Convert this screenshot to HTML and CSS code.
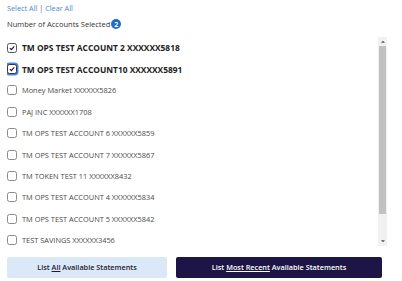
FILE: index.html
```html
<!DOCTYPE html>
<html>
<head>
<meta charset="utf-8">
<link rel="stylesheet" href="styles.css">
</head>
<body>
<div class="page">
  <div class="links"><a class="link">Select All</a> <span class="sep">|</span> <a class="link">Clear All</a></div>
  <div class="count">Number of Accounts Selected <span class="badge">2</span></div>
  <div class="list-wrap">
    <div class="list">
      <label class="row sel"><span class="cb on"><svg viewBox="0 0 10 10"><path d="M2.3 5.2 L4.2 7.1 L7.8 2.9" /></svg></span><span class="name">TM OPS TEST ACCOUNT 2 XXXXXX5818</span></label>
      <label class="row sel"><span class="cb on focus"><svg viewBox="0 0 10 10"><path d="M2.3 5.2 L4.2 7.1 L7.8 2.9" /></svg></span><span class="name">TM OPS TEST ACCOUNT10 XXXXXX5891</span></label>
      <label class="row"><span class="cb"></span><span class="name">Money Market XXXXXX5826</span></label>
      <label class="row"><span class="cb"></span><span class="name">PAJ INC XXXXXX1708</span></label>
      <label class="row"><span class="cb"></span><span class="name">TM OPS TEST ACCOUNT 6 XXXXXX5859</span></label>
      <label class="row"><span class="cb"></span><span class="name">TM OPS TEST ACCOUNT 7 XXXXXX5867</span></label>
      <label class="row"><span class="cb"></span><span class="name">TM TOKEN TEST 11 XXXXXX8432</span></label>
      <label class="row"><span class="cb"></span><span class="name">TM OPS TEST ACCOUNT 4 XXXXXX5834</span></label>
      <label class="row"><span class="cb"></span><span class="name">TM OPS TEST ACCOUNT 5 XXXXXX5842</span></label>
      <label class="row"><span class="cb"></span><span class="name">TEST SAVINGS XXXXXX3456</span></label>
      <label class="row"><span class="cb"></span><span class="name">TM OPS TEST ACCOUNT 8 XXXXXX5875</span></label>
    </div>
    <div class="scrollbar">
      <div class="arrow up"><svg viewBox="0 0 6 4"><path d="M0 4 L3 1 L6 4 Z"/></svg></div>
      <div class="thumb"></div>
      <div class="track"></div>
      <div class="arrow down"><svg viewBox="0 0 6 4"><path d="M0 0 L3 3 L6 0 Z"/></svg></div>
    </div>
  </div>
  <div class="actions">
    <div class="btn light">List <span class="ul">All</span> Available Statements</div>
    <div class="btn dark">List <span class="ul">Most Recent</span> Available Statements</div>
  </div>
</div>
</body>
</html>
```

FILE: styles.css
```css
* { box-sizing: border-box; }
html, body { margin: 0; padding: 0; background: #ffffff; }
body {
  font-family: "Open Sans", "Noto Sans", sans-serif;
  color: #333333;
  width: 402px;
  height: 281px;
  overflow: hidden;
}
.page { padding: 0 0 0 7px; }
.links {
  height: 16px;
  padding-top: 2px;
  font-size: 7.3px;
  line-height: 12px;
  color: #4a8ad0;
}
.link { color: #4a8ad0; text-decoration: none; }
.sep { color: #666; }
.count {
  height: 18px;
  font-size: 7.5px;
  line-height: 12px;
  color: #333;
  display: flex;
  align-items: center;
  gap: 1px;
  padding-bottom: 2px;
}
.badge {
  display: inline-flex;
  align-items: center;
  justify-content: center;
  width: 10px;
  height: 10px;
  border-radius: 50%;
  background: #1f6fc4;
  color: #fff;
  font-size: 7px;
  font-weight: 700;
  line-height: 1;
}
.list-wrap {
  margin-top: 3px;
  display: flex;
  height: 209px;
  width: 380px;
}
.list {
  flex: 1;
  overflow: hidden;
}
.row {
  height: 21.4px;
  display: flex;
  align-items: center;
  gap: 5px;
  font-size: 7.4px;
  color: #4a4a4a;
  white-space: nowrap;
}
.row.sel .name { font-weight: 700; color: #222; font-size: 8.4px; }
.cb {
  width: 10px;
  height: 10px;
  border: 1px solid #8a8a8a;
  border-radius: 2.5px;
  background: #fff;
  flex: none;
  display: flex;
  align-items: center;
  justify-content: center;
}
.cb.on { border-color: #555; }
.cb.focus { box-shadow: 0 0 0 1.5px #4a8ad8; border-color: #333; }
.cb svg { width: 10px; height: 10px; }
.cb svg path { fill: none; stroke: #1b1646; stroke-width: 1.4; }
.scrollbar {
  width: 9px;
  display: flex;
  flex-direction: column;
  background: #f1f1f1;
}
.arrow {
  height: 9px;
  display: flex;
  align-items: center;
  justify-content: center;
  background: #f1f1f1;
}
.arrow svg { width: 4px; height: 3px; }
.arrow svg path { fill: #505050; }
.thumb { height: 168px; background: #c1c1c1; margin: 0 1px; }
.track { flex: 1; }
.actions {
  margin-top: 11px;
  display: flex;
  gap: 9px;
}
.btn {
  height: 21px;
  border-radius: 2px;
  font-size: 7.3px;
  line-height: 21px;
  font-weight: 600;
  text-align: center;
  white-space: pre;
}
.btn.light { width: 160px; background: #dae8f7; color: #1c1c2c; }
.btn.dark { width: 206px; background: #1e1547; color: #ffffff; }
.ul { text-decoration: underline; text-underline-offset: 1px; }
```
